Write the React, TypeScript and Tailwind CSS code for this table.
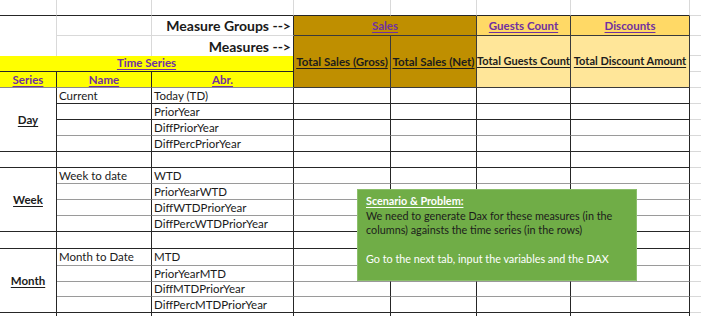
import React from 'react';

type CellProps = { className?: string; children?: React.ReactNode };

const Cell: React.FC<CellProps> = ({ className = '', children }) => (
  <div className={'flex items-center overflow-hidden whitespace-nowrap ' + className}>{children}</div>
);

const Link: React.FC<{ children: React.ReactNode }> = ({ children }) => (
  <span className="font-bold text-[#7030a0] underline underline-offset-2">{children}</span>
);

const Head: React.FC<{ children: React.ReactNode }> = ({ children }) => (
  <span className="font-bold text-[#1c1c1c] underline underline-offset-2">{children}</span>
);

type Row = { name?: string; abr: string; line: 'black' | 'gray' };

const groups: { label: string; rows: Row[] }[] = [
  {
    label: 'Day',
    rows: [
      { name: 'Current', abr: 'Today (TD)', line: 'black' },
      { abr: 'PriorYear', line: 'black' },
      { abr: 'DiffPriorYear', line: 'gray' },
      { abr: 'DiffPercPriorYear', line: 'black' },
    ],
  },
  {
    label: 'Week',
    rows: [
      { name: 'Week to date', abr: 'WTD', line: 'gray' },
      { abr: 'PriorYearWTD', line: 'gray' },
      { abr: 'DiffWTDPriorYear', line: 'gray' },
      { abr: 'DiffPercWTDPriorYear', line: 'black' },
    ],
  },
  {
    label: 'Month',
    rows: [
      { name: 'Month to Date', abr: 'MTD', line: 'gray' },
      { abr: 'PriorYearMTD', line: 'gray' },
      { abr: 'DiffMTDPriorYear', line: 'gray' },
      { abr: 'DiffPercMTDPriorYear', line: 'black' },
    ],
  },
];

const BodyRow: React.FC<{ row: Row }> = ({ row }) => {
  const b = row.line === 'black' ? 'border-b-[#262626]' : 'border-b-[#9a9a9a]';
  return (
    <>
      <Cell className={'border-r border-b border-r-[#262626] pl-[2px] ' + b}>{row.name}</Cell>
      <Cell className={'border-r border-b border-r-[#262626] pl-[2px] ' + b}>{row.abr}</Cell>
      <Cell className={'border-r border-b border-r-[#262626] ' + b} />
      <Cell className={'border-r border-b border-r-[#262626] ' + b} />
      <Cell className={'border-r border-b border-r-[#262626] ' + b} />
      <Cell className={'border-r border-b border-r-[#262626] ' + b} />
      <Cell className="border-b border-[#d9d9d9]" />
    </>
  );
};

const Spacer: React.FC = () => (
  <>
    <Cell className="border-r border-b border-[#262626]" />
    <Cell className="border-r border-b border-[#262626]" />
    <Cell className="border-r border-b border-[#262626]" />
    <Cell className="border-r border-b border-[#262626]" />
    <Cell className="border-r border-b border-[#262626]" />
    <Cell className="border-r border-b border-[#262626]" />
    <Cell className="border-r border-b border-[#262626]" />
    <Cell className="border-b border-[#d9d9d9]" />
  </>
);

export default function App() {
  return (
    <div className="relative h-[316px] w-[701px] overflow-hidden bg-white font-[family-name:Lato,sans-serif] text-[11.5px] text-[#1a1a1a]">
      <div className="grid grid-cols-[57px_95px_142px_97px_86px_94px_119px_11px] grid-rows-[16px_20px_20px_16px_16px_16px_16px_16px_16px_16px_16px_16px_16px_16px_17px_17px_16px_15px_16px_16px]">
        {/* row 1 */}
        <Cell className="border-r border-b border-r-[#d9d9d9] border-b-[#262626]" />
        <Cell className="border-r border-b border-r-[#d9d9d9] border-b-[#262626]" />
        <Cell className="border-r border-b border-r-[#d9d9d9] border-b-[#262626]" />
        <Cell className="border-r border-b border-r-[#d9d9d9] border-b-[#262626]" />
        <Cell className="border-r border-b border-r-[#d9d9d9] border-b-[#262626]" />
        <Cell className="border-r border-b border-r-[#d9d9d9] border-b-[#262626]" />
        <Cell className="border-r border-b border-r-[#d9d9d9] border-b-[#262626]" />
        <Cell className="border-b border-[#d9d9d9]" />

        {/* row 2 */}
        <Cell className="row-span-2 border-r border-[#d9d9d9]" />
        <Cell className="border-r border-b border-[#d9d9d9]" />
        <Cell className="items-end justify-end border-r border-b border-r-[#262626] border-b-[#d9d9d9] pr-[2px] text-[14px] font-bold leading-[18px]">
          Measure Groups --&gt;
        </Cell>
        <Cell className="col-span-2 items-end justify-center border-r border-b border-[#3a3a3a] bg-[#bf8f00] pb-[1px]">
          <Link>Sales</Link>
        </Cell>
        <Cell className="items-end justify-center border-r border-b border-[#3a3a3a] bg-[#ffd966] pb-[1px]">
          <Link>Guests Count</Link>
        </Cell>
        <Cell className="items-end justify-center border-r border-b border-[#3a3a3a] bg-[#ffd966] pb-[1px]">
          <Link>Discounts</Link>
        </Cell>
        <Cell className="border-b border-[#d9d9d9]" />

        {/* row 3 */}
        <Cell className="border-r border-[#d9d9d9]" />
        <Cell className="items-end justify-end border-r border-r-[#262626] pr-[2px] text-[14px] font-bold leading-[18px]">
          Measures --&gt;
        </Cell>
        <Cell className="row-span-3 justify-center border-r border-b border-[#3a3a3a] bg-[#bf8f00]">
          <Head>Total Sales (Gross)</Head>
        </Cell>
        <Cell className="row-span-3 justify-center border-r border-b border-[#3a3a3a] bg-[#bf8f00]">
          <Head>Total Sales (Net)</Head>
        </Cell>
        <Cell className="row-span-3 justify-center border-r border-b border-[#3a3a3a] bg-[#ffe699] text-[11px]">
          <Head>Total Guests Count</Head>
        </Cell>
        <Cell className="row-span-3 justify-center border-r border-b border-[#3a3a3a] bg-[#ffe699] text-[11px]">
          <Head>Total Discount Amount</Head>
        </Cell>
        <Cell className="border-b border-[#d9d9d9]" />

        {/* row 4 */}
        <Cell className="col-span-3 items-end justify-center border-r border-b border-[#262626] bg-[#ffff00]">
          <Link>Time Series</Link>
        </Cell>
        <Cell className="border-b border-[#d9d9d9]" />

        {/* row 5 */}
        <Cell className="justify-center border-r border-b border-r-[#262626] border-b-[#8a8a8a] bg-[#ffff00]">
          <Link>Series</Link>
        </Cell>
        <Cell className="justify-center border-r border-b border-r-[#262626] border-b-[#8a8a8a] bg-[#ffff00]">
          <Link>Name</Link>
        </Cell>
        <Cell className="justify-center border-r border-b border-r-[#262626] border-b-[#8a8a8a] bg-[#ffff00]">
          <Link>Abr.</Link>
        </Cell>
        <Cell className="border-b border-[#d9d9d9]" />

        {groups.map((g, gi) => (
          <React.Fragment key={g.label}>
            {g.rows.map((r, i) => (
              <React.Fragment key={r.abr}>
                {i === 0 && (
                  <Cell className="row-span-4 justify-center border-r border-b border-[#262626]">
                    <Head>{g.label}</Head>
                  </Cell>
                )}
                <BodyRow row={r} />
              </React.Fragment>
            ))}
            {gi < groups.length - 1 && <Spacer />}
          </React.Fragment>
        ))}

        {/* row 20 */}
        <Cell className="border-r border-[#262626]" />
        <Cell className="border-r border-[#262626]" />
        <Cell className="border-r border-[#262626]" />
        <Cell className="border-r border-[#262626]" />
        <Cell className="border-r border-[#262626]" />
        <Cell className="border-r border-[#262626]" />
        <Cell className="border-r border-[#262626]" />
        <Cell />
      </div>

      {/* text box shape */}
      <div className="absolute top-[189px] left-[357px] h-[92px] w-[280px] border border-[#8cbf6c] bg-[#70ad47] px-[8px] pt-[4px] text-[10.8px] leading-[14.5px] whitespace-nowrap">
        <div className="font-bold text-white underline underline-offset-2">Scenario &amp; Problem:</div>
        <div className="text-[#1c1c1c]">We need to generate Dax for these measures (in the</div>
        <div className="text-[#1c1c1c]">columns) againsts the time series (in the rows)</div>
        <div className="h-[14.5px]" />
        <div className="text-white">Go to the next tab, input the variables and the DAX</div>
      </div>
    </div>
  );
}
